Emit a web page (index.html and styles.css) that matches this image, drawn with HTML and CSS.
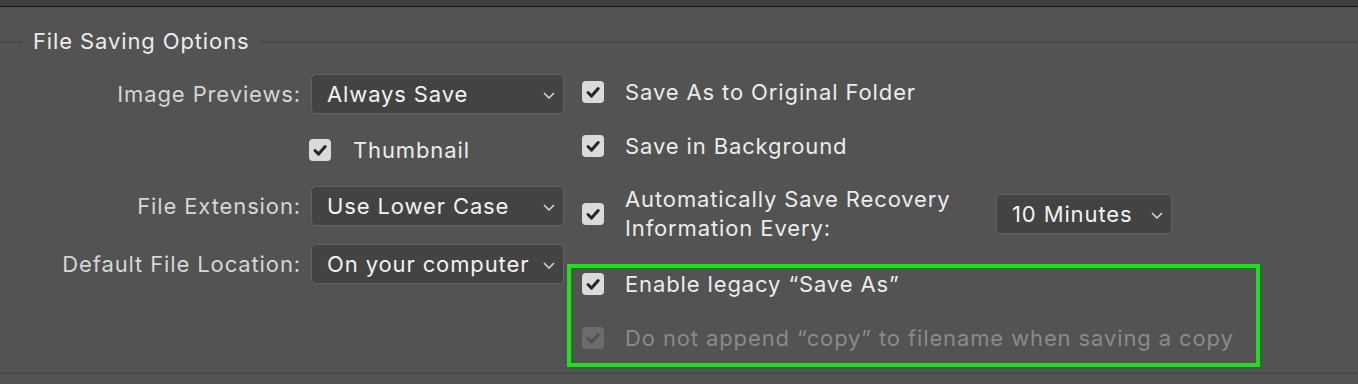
FILE: index.html
```html
<!DOCTYPE html>
<html lang="en">
<head>
<meta charset="utf-8">
<title>File Saving Options</title>
<link rel="stylesheet" href="styles.css">
</head>
<body>
<div class="topbar"></div>
<section class="group">
  <div class="legend">
    <span class="legend-line legend-line--short"></span>
    <span class="legend-title">File Saving Options</span>
    <span class="legend-line"></span>
  </div>
  <div class="content">
    <div class="left">
      <div class="field">
        <span class="field-label">Image Previews:</span>
        <div class="select select--wide"><span>Always Save</span><svg class="chev" viewBox="0 0 12 7"><path d="M1 1l5 5 5-5"/></svg></div>
      </div>
      <div class="field field--check">
        <span></span>
        <label class="check check--thumb"><span class="box"><svg viewBox="0 0 22 22"><path d="M6 11.5l3.6 3.6L16.2 7.6"/></svg></span><span class="check-text">Thumbnail</span></label>
      </div>
      <div class="field">
        <span class="field-label">File Extension:</span>
        <div class="select select--wide"><span>Use Lower Case</span><svg class="chev" viewBox="0 0 12 7"><path d="M1 1l5 5 5-5"/></svg></div>
      </div>
      <div class="field field--last">
        <span class="field-label">Default File Location:</span>
        <div class="select select--wide"><span>On your computer</span><svg class="chev" viewBox="0 0 12 7"><path d="M1 1l5 5 5-5"/></svg></div>
      </div>
    </div>
    <div class="right">
      <label class="check row-a"><span class="box"><svg viewBox="0 0 22 22"><path d="M6 11.5l3.6 3.6L16.2 7.6"/></svg></span><span class="check-text">Save As to Original Folder</span></label>
      <label class="check row-b"><span class="box"><svg viewBox="0 0 22 22"><path d="M6 11.5l3.6 3.6L16.2 7.6"/></svg></span><span class="check-text">Save in Background</span></label>
      <div class="check row-c"><span class="box"><svg viewBox="0 0 22 22"><path d="M6 11.5l3.6 3.6L16.2 7.6"/></svg></span><span class="check-text check-text--multi">Automatically Save Recovery<br>Information Every:</span>
        <div class="select select--small"><span>10 Minutes</span><svg class="chev" viewBox="0 0 12 7"><path d="M1 1l5 5 5-5"/></svg></div>
      </div>
      <div class="highlight">
        <label class="check"><span class="box"><svg viewBox="0 0 22 22"><path d="M6 11.5l3.6 3.6L16.2 7.6"/></svg></span><span class="check-text">Enable legacy “Save As”</span></label>
        <label class="check check--disabled row-e"><span class="box"><svg viewBox="0 0 22 22"><path d="M6 11.5l3.6 3.6L16.2 7.6"/></svg></span><span class="check-text">Do not append “copy” to filename when saving a copy</span></label>
      </div>
    </div>
  </div>
  <div class="bottom-line"></div>
</section>
</body>
</html>
```

FILE: styles.css
```css
* { box-sizing: border-box; }
html, body { margin: 0; padding: 0; }
body {
  background: #535353;
  font-family: Inter, "Liberation Sans", sans-serif;
  font-size: 22px;
  letter-spacing: 0.88px;
  color: #ebebeb;
  width: 1358px;
  height: 384px;
  overflow: hidden;
}
.topbar {
  height: 7px;
  background: #3e3e3e;
  border-bottom: 1px solid #101010;
}
.group { display: flex; flex-direction: column; }
.legend {
  display: flex;
  align-items: center;
  height: 28px;
  margin-top: 21px;
}
.legend-line {
  flex: 1;
  height: 2px;
  background: #484848;
}
.legend-line--short { flex: 0 0 22px; }
.legend-title {
  padding: 0 10px 0 11px;
  line-height: 28px;
  color: #ececec;
  margin-top: -2px;
}
.content { display: flex; }
.left {
  width: 564px;
  padding-top: 18px;
  display: flex;
  flex-direction: column;
}
.field {
  display: grid;
  grid-template-columns: 300px 253px;
  column-gap: 11px;
  align-items: center;
  height: 40px;
}
.field + .field { margin-top: 16px; }
.field.field--last { margin-top: 18px; }
.field-label {
  text-align: right;
  color: #d6d6d6;
  margin-right: -1px;
}
.select {
  height: 40px;
  display: flex;
  align-items: center;
  justify-content: space-between;
  padding: 0 8px 0 15px;
  background: #434343;
  border: 1px solid #626262;
  border-radius: 5px;
  color: #f2f2f2;
  white-space: nowrap;
}
.chev {
  width: 12px;
  height: 7px;
  flex: none;
  margin-top: 2px;
}
.chev path {
  fill: none;
  stroke: #d4d4d4;
  stroke-width: 1.6;
}
.check {
  display: flex;
  align-items: center;
  height: 32px;
  white-space: nowrap;
}
.box {
  width: 22px;
  height: 22px;
  flex: none;
  border-radius: 4px;
  background: #dadada;
  display: flex;
}
.box svg { width: 22px; height: 22px; }
.box path {
  fill: none;
  stroke: #262626;
  stroke-width: 3;
  stroke-linecap: round;
  stroke-linejoin: round;
}
.check-text {
  margin-left: 21px;
  color: #ececec;
}
.check--thumb { height: 40px; margin-left: -2px; }
.check--thumb .check-text { margin-left: 22px; }
.right {
  padding-top: 20px;
  margin-left: 3px;
  display: flex;
  flex-direction: column;
}
.right > .check { padding-left: 15px; }
.row-b { margin-top: 22px; }
.row-c { margin-top: 23px; height: 58px; }
.check-text--multi {
  width: 371px;
  line-height: 29px;
  white-space: normal;
}
.select--small { width: 176px; }
.highlight {
  margin-top: 21px;
  width: 693px;
  height: 103px;
  border: 4px solid #14e814;
  padding: 0 0 0 11px;
}
.row-e { margin-top: 22px; }
.check--disabled .box { background: #6c6c6c; }
.check--disabled .box path { stroke: #525252; }
.check--disabled .check-text { color: #8a8a8a; }
.bottom-line {
  height: 2px;
  background: #484848;
  margin-top: 5px;
}
```
